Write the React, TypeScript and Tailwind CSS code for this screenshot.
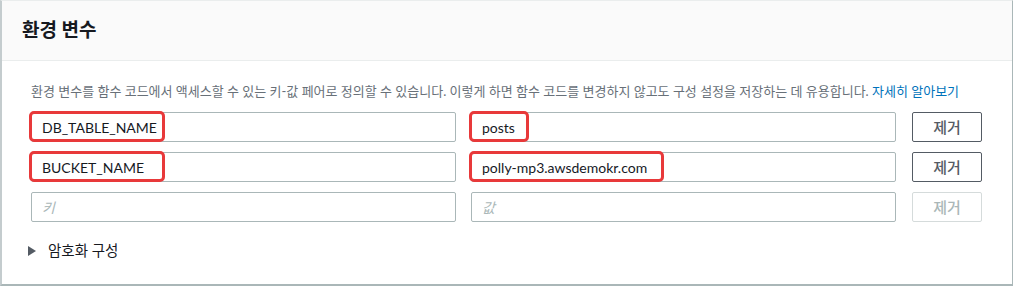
import React from "react";

const font = { fontFamily: '"Lato", "Noto Sans CJK KR", sans-serif' };

type Row = { k: string; v: string; kw?: number; vw?: number };

const rows: Row[] = [
  { k: "DB_TABLE_NAME", v: "posts", kw: 136, vw: 60 },
  { k: "BUCKET_NAME", v: "polly-mp3.awsdemokr.com", kw: 136, vw: 195 },
];

function Field({ value, placeholder, mark }: { value?: string; placeholder?: string; mark?: number }) {
  return (
    <div className="relative w-[425px] h-[30px]">
      <div className="h-full w-full border border-[#aab7b8] rounded-[2px] bg-white flex items-center px-[10px] text-[14px] text-[#16191f]">
        {value ? value : <span className="italic text-[#aab7b8]">{placeholder}</span>}
      </div>
      {mark ? (
        <div
          className="absolute left-[-2px] top-[-1px] h-[31px] border-[3px] border-[#e8393a] rounded-[5px]"
          style={{ width: mark }}
        />
      ) : null}
    </div>
  );
}

function RemoveBtn({ disabled }: { disabled?: boolean }) {
  return (
    <button
      className={
        "w-[70px] h-[30px] rounded-[2px] border text-[15px] font-medium flex items-center justify-center " +
        (disabled ? "border-[#d5dbdb] text-[#aab7b8]" : "border-[#545b64] text-[#545b64]")
      }
    >
      제거
    </button>
  );
}

export default function App() {
  return (
    <div className="w-[1013px] h-[287px] bg-white" style={font}>
      <div className="w-[1013px] h-[286px] border-l-2 border-r border-b-2 border-t border-t-[#eaeded] border-l-[#c4ccce] border-r-[#aab7b8] border-b-[#aab7b8] flex flex-col">
        <div className="h-[60px] bg-[#fafafa] border-b border-[#eaeded] flex items-center pl-[20px]">
          <h2 className="text-[19px] font-bold text-[#16191f]">환경 변수</h2>
        </div>
        <div className="pl-[29px] pt-[22px]">
          <p className="text-[13px] text-[#687078] leading-[16px] whitespace-nowrap">
            환경 변수를 함수 코드에서 액세스할 수 있는 키-값 페어로 정의할 수 있습니다. 이렇게 하면 함수 코드를 변경하지 않고도 구성 설정을 저장하는 데 유용합니다.{" "}
            <span className="text-[#0073bb]">자세히 알아보기</span>
          </p>
          <div className="mt-[13px] flex flex-col gap-[10px]">
            {rows.map((r) => (
              <div key={r.k} className="flex items-center">
                <Field value={r.k} mark={r.kw} />
                <div className="w-[15px]" />
                <Field value={r.v} mark={r.vw} />
                <div className="w-[16px]" />
                <RemoveBtn />
              </div>
            ))}
            <div className="flex items-center">
              <Field placeholder="키" />
              <div className="w-[15px]" />
              <Field placeholder="값" />
              <div className="w-[16px]" />
              <RemoveBtn disabled />
            </div>
          </div>
        </div>
        <div className="pl-[26px] mt-[18px] flex items-center gap-[11px] text-[14.5px] text-[#16191f]">
          <svg width="9" height="10" viewBox="0 0 9 10">
            <path d="M0 0 L8 5 L0 10 Z" fill="#545b64" />
          </svg>
          <span>암호화 구성</span>
        </div>
      </div>
    </div>
  );
}
